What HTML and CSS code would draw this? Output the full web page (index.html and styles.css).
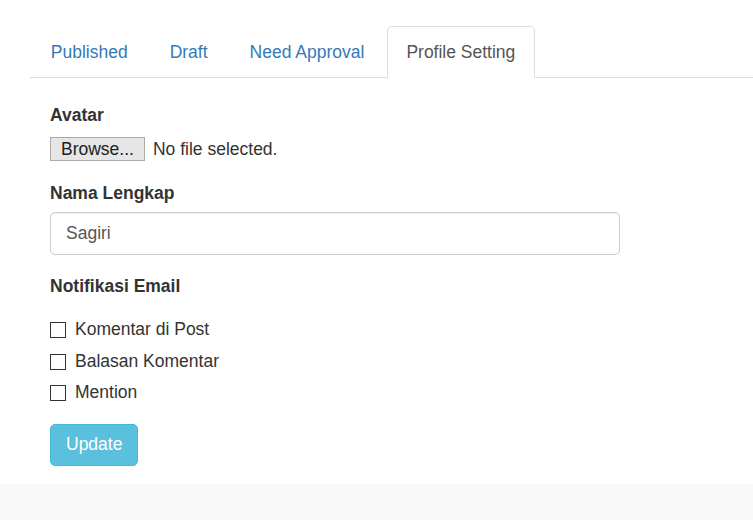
FILE: index.html
```html
<!DOCTYPE html>
<html>
<head>
<meta charset="utf-8">
<link rel="stylesheet" href="styles.css">
</head>
<body>
<div class="panel">
  <ul class="tabs">
    <li class="tab"><a href="#">Published</a></li>
    <li class="tab"><a href="#">Draft</a></li>
    <li class="tab"><a href="#">Need Approval</a></li>
    <li class="tab active"><a href="#">Profile Setting</a></li>
  </ul>
  <form class="form">
    <div class="group">
      <div class="label">Avatar</div>
      <div class="file-row">
        <span class="browse">Browse...</span>
        <span class="file-name">No file selected.</span>
      </div>
    </div>
    <div class="group">
      <div class="label">Nama Lengkap</div>
      <div class="input">Sagiri</div>
    </div>
    <div class="group">
      <div class="label">Notifikasi Email</div>
      <div class="checks">
        <div class="check"><span class="box"></span>Komentar di Post</div>
        <div class="check"><span class="box"></span>Balasan Komentar</div>
        <div class="check"><span class="box"></span>Mention</div>
      </div>
    </div>
    <span class="btn">Update</span>
  </form>
</div>
</body>
</html>
```
FILE: styles.css
```css
html, body {
  margin: 0;
  padding: 0;
  background: #f9f9f9;
  font-family: "Liberation Sans", Arial, sans-serif;
  font-size: 17.5px;
  line-height: 25px;
  color: #333;
}
.panel {
  background: #fff;
  height: 484px;
  padding: 26px 0 0 30px;
  box-sizing: border-box;
}
.tabs {
  list-style: none;
  margin: 0;
  padding: 0 0 0 1px;
  display: flex;
  border-bottom: 1px solid #ddd;
}
.tab {
  margin-right: 2.5px;
  margin-bottom: -1px;
}
.tab a {
  display: block;
  padding: 12.5px 18.75px;
  border: 1px solid transparent;
  border-radius: 5px 5px 0 0;
  color: #337ab7;
  text-decoration: none;
}
.tab.active a {
  color: #555;
  background: #fff;
  border-color: #ddd #ddd transparent #ddd;
}
.form {
  display: block;
  padding: 25px 0 0 20px;
}
.group {
  margin-bottom: 18.75px;
}
.label {
  font-weight: bold;
  margin-bottom: 6.25px;
}
.file-row {
  display: flex;
  align-items: center;
  height: 28px;
}
.browse {
  box-sizing: border-box;
  height: 24px;
  line-height: 22px;
  padding: 0 10px;
  background: #e6e6e6;
  border: 1px solid #a9a9a9;
  color: #222;
  margin-top: 2px;
}
.file-name {
  margin-left: 8px;
  margin-top: 2px;
}
.input {
  box-sizing: border-box;
  width: 570px;
  height: 42.5px;
  padding: 7.5px 15px;
  border: 1px solid #ccc;
  border-radius: 5px;
  color: #555;
  box-shadow: inset 0 1px 1px rgba(0,0,0,.075);
}
.check {
  display: flex;
  align-items: center;
  margin: 12.5px 0;
  height: 25px;
}
.check:first-child {
  margin-top: 18.75px;
}
.check + .check {
  margin-top: -6.25px;
}
.box {
  box-sizing: border-box;
  width: 16px;
  height: 16px;
  border: 1px solid #333;
  background: #fff;
  margin-right: 9px;
  margin-top: 1px;
}
.btn {
  display: inline-block;
  box-sizing: border-box;
  height: 42.5px;
  padding: 7.5px 15px;
  background: #5bc0de;
  border: 1px solid #46b8da;
  border-radius: 5px;
  color: #fff;
}
```
